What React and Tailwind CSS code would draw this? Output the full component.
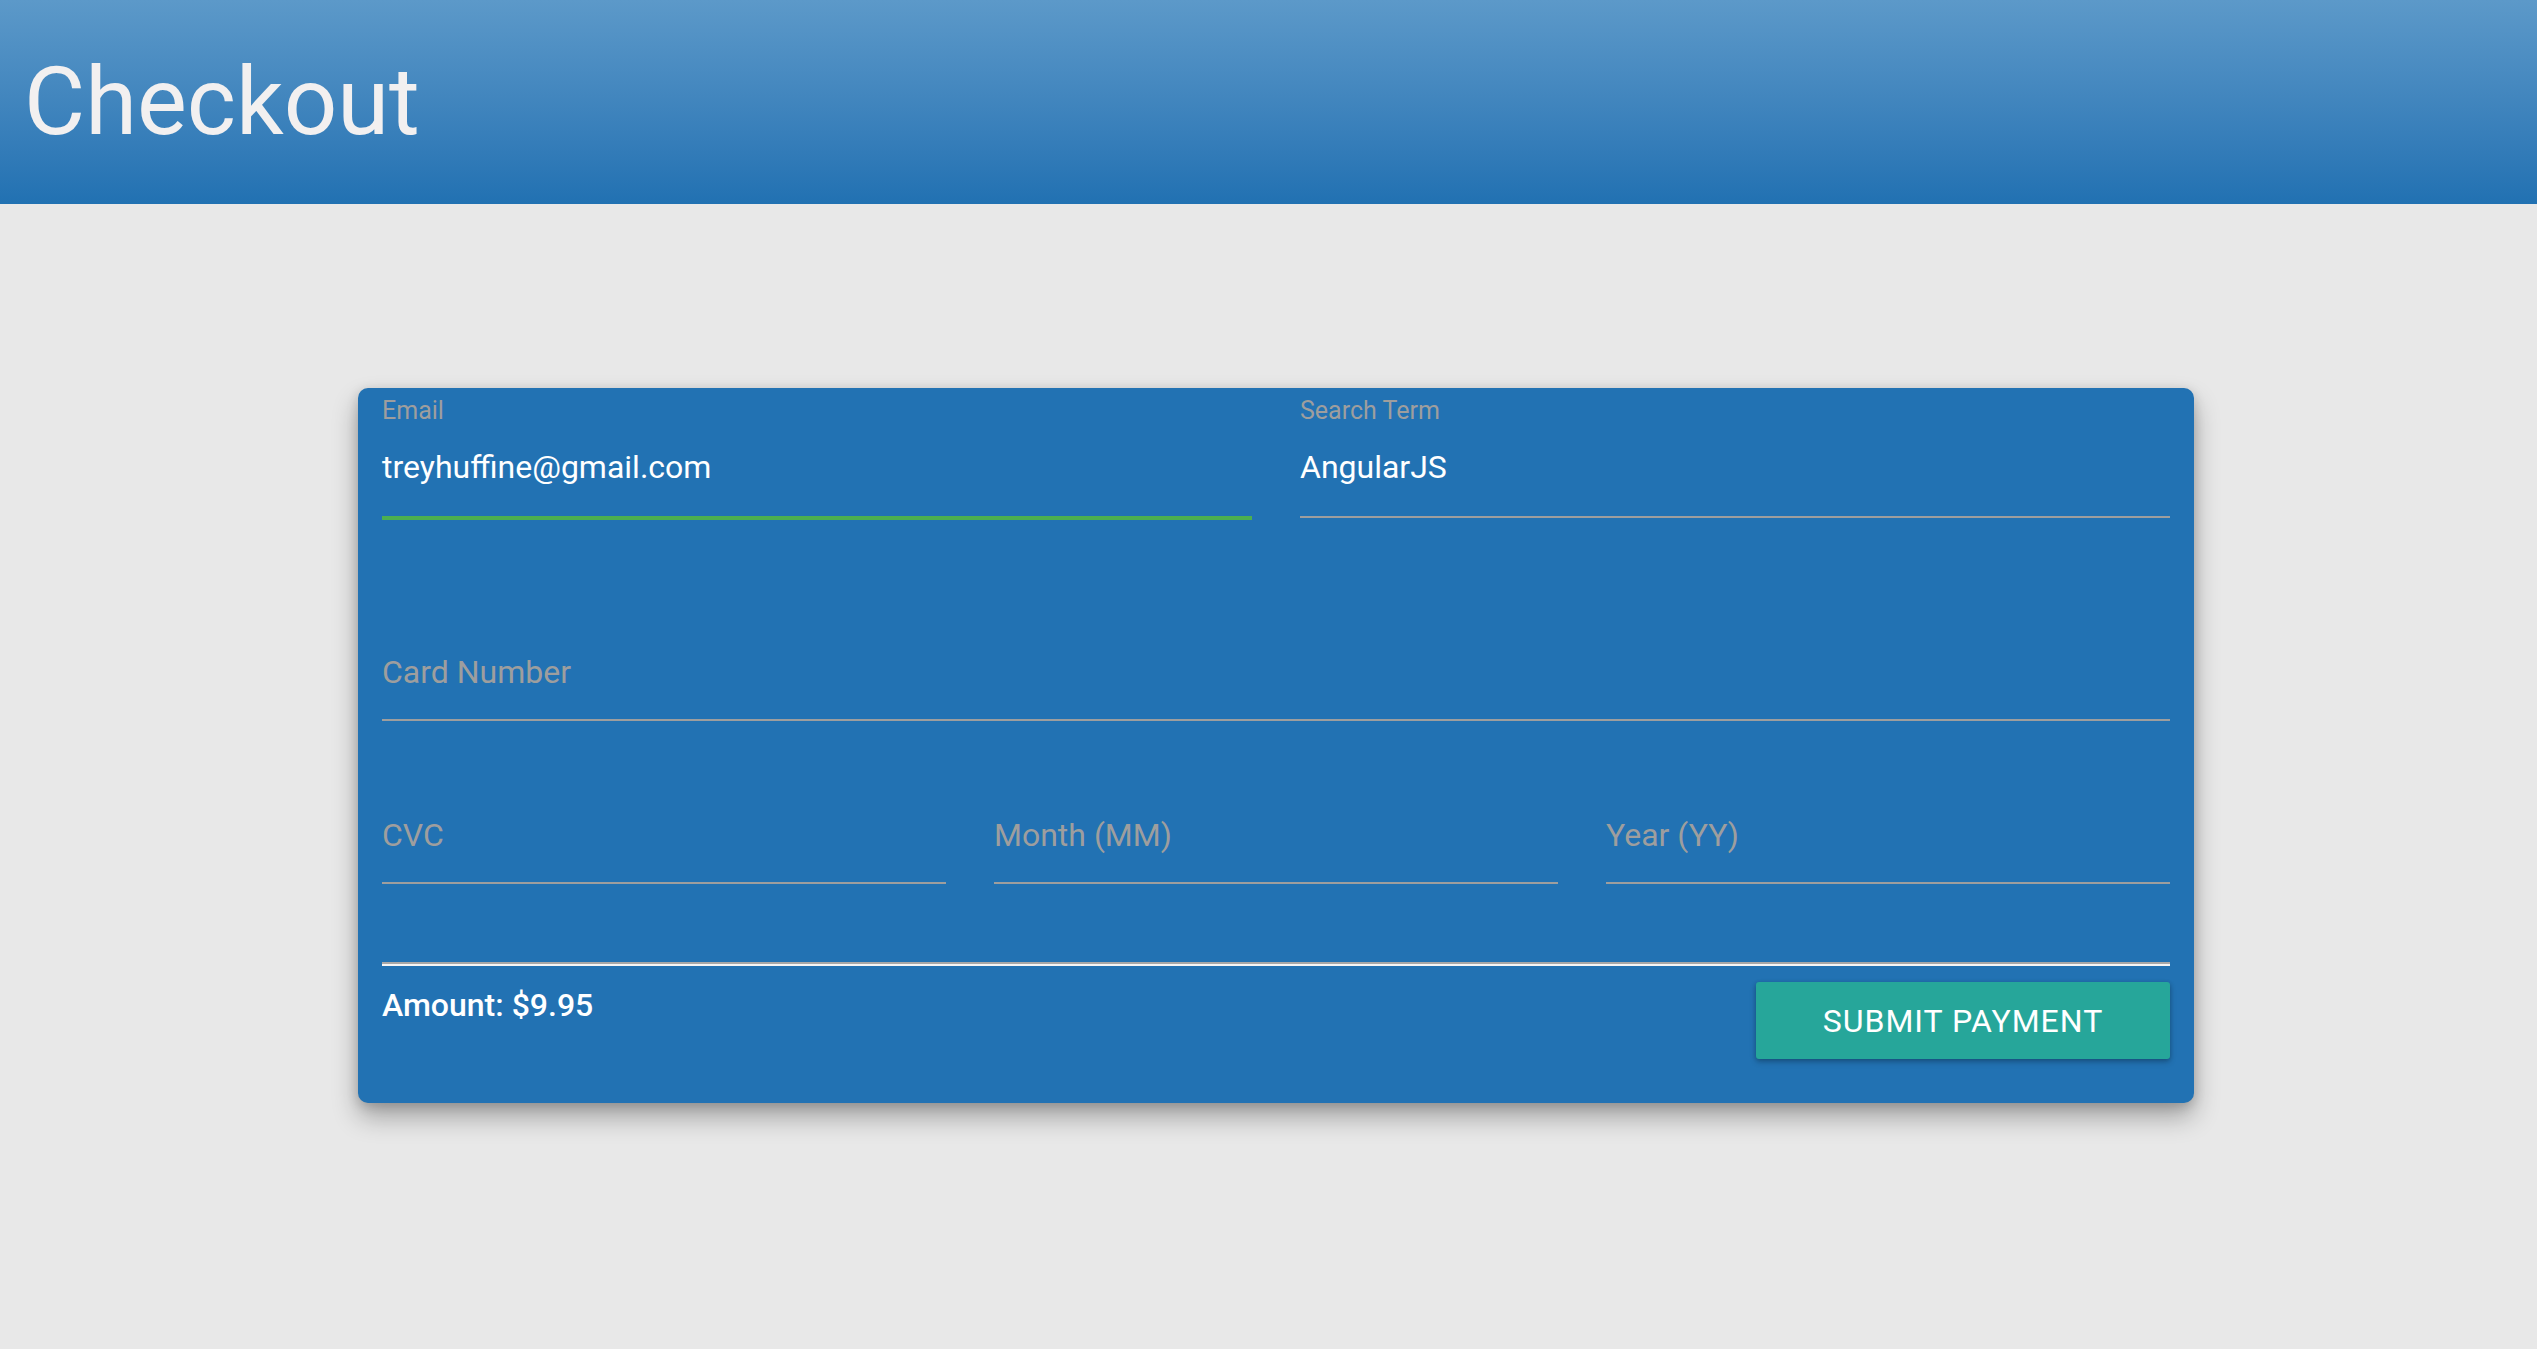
import React from 'react';

const font = { fontFamily: 'Roboto, "Liberation Sans", sans-serif' };

function Field({ label, value, placeholder, active = false, height = 'h-[67px]', className = '' }) {
    return (
        <div className={`flex flex-col ${className}`}>
            <div className="h-[25px] text-[25px] leading-[25px] text-[#9e9e9e]">{label}</div>
            <div
                className={`mt-[28px] text-[32px] leading-[32px] ${
                    value ? 'text-white' : 'text-[#9e9e9e]'
                } ${active ? 'h-[69px] border-b-4 border-[#4caf50]' : `${height} border-b-2 border-[#9e9e9e]`}`}
            >
                {value || placeholder}
            </div>
        </div>
    );
}

export default function App() {
    return (
        <div className="min-h-[1349px] w-full bg-[#e8e8e8]" style={font}>
            {/* Header bar */}
            <header className="flex h-[204px] items-center bg-gradient-to-b from-[#5c99c9] to-[#2171b2] pl-[24px]">
                <h1 className="text-[94px] leading-none font-normal text-[#f2f0f0]">Checkout</h1>
            </header>

            {/* Payment card */}
            <div className="ml-[358px] mt-[184px] w-[1836px] rounded-[10px] bg-[#2272b3] px-[24px] pt-[10px] pb-[44px] shadow-[0_14px_26px_rgba(0,0,0,0.3),0_3px_12px_rgba(0,0,0,0.16)]">
                <div className="grid grid-cols-2 items-start gap-x-[48px]">
                    <Field label="Email" value="treyhuffine@gmail.com" active />
                    <Field label="Search Term" value="AngularJS" />
                </div>

                <Field label="" placeholder="Card Number" height="h-[65px]" className="mt-[83px]" />

                <div className="mt-[98px] grid grid-cols-3 gap-x-[48px]">
                    <div className="h-[65px] border-b-2 border-[#9e9e9e] text-[32px] leading-[32px] text-[#9e9e9e]">CVC</div>
                    <div className="h-[65px] border-b-2 border-[#9e9e9e] text-[32px] leading-[32px] text-[#9e9e9e]">Month (MM)</div>
                    <div className="h-[65px] border-b-2 border-[#9e9e9e] text-[32px] leading-[32px] text-[#9e9e9e]">Year (YY)</div>
                </div>

                <div className="mt-[78px] h-[4px] border-t-2 border-b-2 border-t-[#a8a8a8] border-b-[#f5f5f5]" />

                <div className="mt-[16px] flex items-start justify-between">
                    <div className="mt-[7px] text-[32px] leading-[32px] font-medium text-white">Amount: $9.95</div>
                    <button
                        type="button"
                        className="h-[77px] w-[414px] rounded-[3px] bg-[#26a69a] text-[32px] uppercase tracking-[1px] text-white shadow-[0_3px_6px_rgba(0,0,0,0.22),0_1px_4px_rgba(0,0,0,0.16)]"
                    >
                        Submit Payment
                    </button>
                </div>
            </div>
        </div>
    );
}
